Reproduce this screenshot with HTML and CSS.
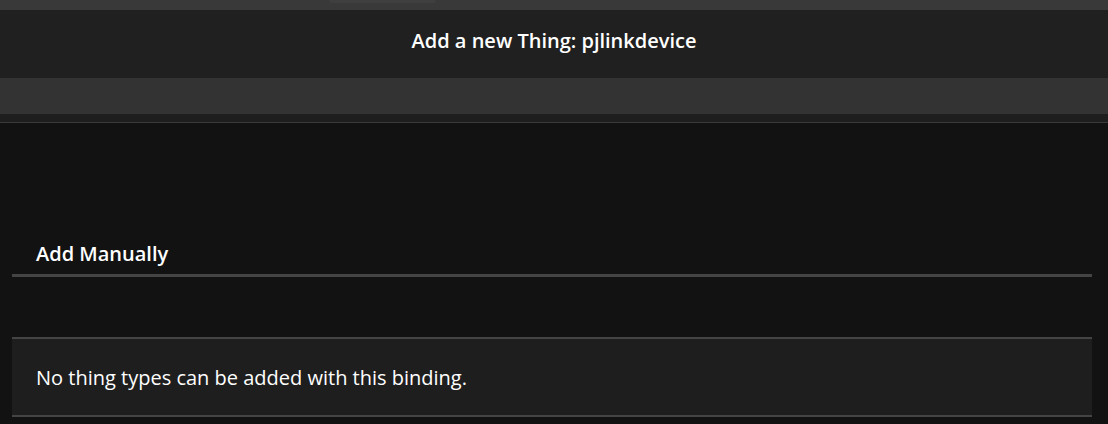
FILE: index.html
```html
<!DOCTYPE html>
<html>
<head>
<meta charset="utf-8">
<link rel="stylesheet" href="styles.css">
</head>
<body>
<div class="topstrip"><div class="tab"></div></div>
<header class="navbar"><h1 class="title">Add a new Thing: pjlinkdevice</h1></header>
<div class="subbar"></div>
<div class="subbar-shadow"></div>
<main class="content">
  <h2 class="block-title">Add Manually</h2>
  <div class="block">No thing types can be added with this binding.</div>
</main>
</body>
</html>
```
FILE: styles.css
```css
html, body {
  margin: 0;
  padding: 0;
  background: #121212;
  font-family: "Open Sans", "Noto Sans", sans-serif;
  color: #ffffff;
}
.topstrip {
  height: 10px;
  background: #393939;
  display: flex;
}
.tab {
  margin-left: 329px;
  width: 107px;
  height: 3px;
  background: #3f3f3f;
  border-radius: 0 0 4px 4px;
}
.navbar {
  height: 68px;
  background: #202020;
  display: flex;
  justify-content: center;
  align-items: flex-start;
}
.title {
  margin: 0;
  padding-top: 17px;
  font-size: 20px;
  line-height: 28px;
  font-weight: 600;
}
.subbar {
  height: 36px;
  background: #333333;
}
.subbar-shadow {
  height: 8px;
  background: #1e1e1e;
  border-bottom: 1px solid #3a3a3a;
}
.content {
  padding: 0 16px 0 12px;
}
.block-title {
  margin: 117px 0 0;
  padding: 0 24px 6px;
  font-size: 20px;
  line-height: 28px;
  font-weight: 600;
  border-bottom: 3px solid #444444;
}
.block {
  margin-top: 60px;
  background: #1e1e1e;
  border-top: 2px solid #444444;
  border-bottom: 2px solid #444444;
  padding: 0 24px;
  height: 76px;
  display: flex;
  align-items: center;
  font-size: 20px;
}
```
